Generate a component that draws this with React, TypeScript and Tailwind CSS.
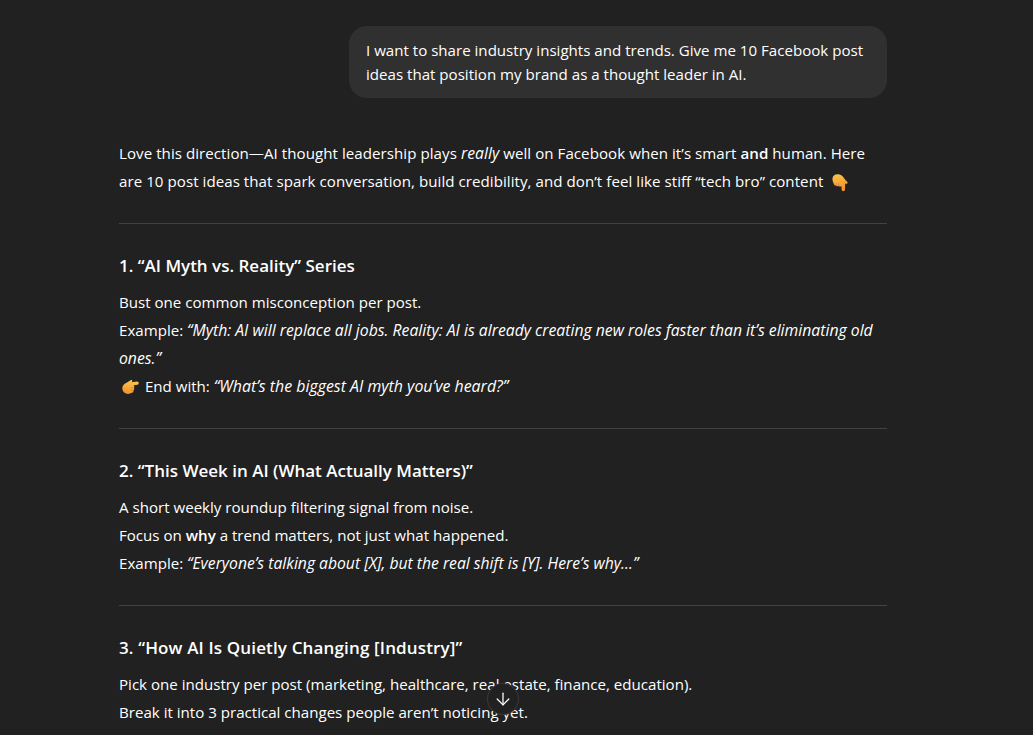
import { ArrowDown } from "lucide-react";

function PointDown() {
  return (
    <svg viewBox="0 0 16 18" className="inline-block ml-[5px] w-4 h-[18px] align-[-5px]">
      <defs>
        <linearGradient id="hand-down" x1="0" y1="0" x2="0.3" y2="1">
          <stop offset="0" stopColor="#fbc84a" />
          <stop offset="1" stopColor="#f2902e" />
        </linearGradient>
      </defs>
      <path d="M0.6 3.6 C1.2 1.4 3.4 0.2 6 0.3 C8.6 0.4 10.4 1.6 11.6 3.6 L13.6 6.2 C15 7.2 15.8 8 15.6 9 C15.2 10 14 10 13.2 9.5 L13 15.6 C12.9 17.8 9.7 17.8 9.6 15.6 L9.4 12 C8.6 12.8 7.4 12.7 6.8 12 C6 12.6 4.8 12.4 4.2 11.5 C3.2 11.8 2.2 11.2 2 10.2 C0.8 8.4 0.2 5.8 0.6 3.6 Z" fill="url(#hand-down)" />
      <path d="M6.8 12 L6.6 9.4 M4.2 11.5 L4.2 9.4" stroke="#d97a2b" strokeWidth="0.8" fill="none" />
    </svg>
  );
}

function PointRight() {
  return (
    <svg viewBox="0 0 17 18" className="inline-block ml-[3px] mr-[2px] w-[17px] h-[18px] align-[-4px]">
      <defs>
        <linearGradient id="hand-right" x1="0.6" y1="0" x2="0.3" y2="1">
          <stop offset="0" stopColor="#fbc84a" />
          <stop offset="1" stopColor="#f2902e" />
        </linearGradient>
      </defs>
      <path d="M0.3 10 C0.4 7.6 2 6 4.2 5 L8.6 2.3 C9.8 1.6 11 2.8 10 3.8 L9.6 4.2 L15 3.6 C17.2 3.6 17.3 6.6 15.2 6.8 L11.6 7.2 C12.5 8 12.6 9.2 11.9 9.9 C12.5 10.7 12.3 11.9 11.4 12.5 C11.7 13.5 11.1 14.6 10 14.8 C8.2 15.8 6 16.2 4 15.6 C1.6 14.8 0.2 12.6 0.3 10 Z" fill="url(#hand-right)" />
      <path d="M11.6 9.9 L8.8 9.7 M11.2 12.5 L8.8 12.2" stroke="#d97a2b" strokeWidth="0.8" fill="none" />
    </svg>
  );
}

export default function App() {
  return (
    <div className="relative h-[735px] overflow-hidden bg-[#212121] text-white text-[15.1px] font-['Open_Sans','Noto_Sans',sans-serif]">
      <div className="w-[768px] ml-[119px] pt-[26px]">
        <div className="flex justify-end">
          <div className="w-[538px] rounded-[18px] bg-[#303030] px-[17px] py-[12px] leading-[24px]">
            I want to share industry insights and trends. Give me 10 Facebook post ideas that position my brand as a thought leader in AI.
          </div>
        </div>

        <p className="mt-[41px] leading-[28px] tracking-[0.05px]">
          Love this direction—AI thought leadership plays <em className="text-[15.7px]">really</em> well on Facebook when it’s smart <strong className="font-semibold">and</strong> human. Here
          <br />
          are 10 post ideas that spark conversation, build credibility, and don’t feel like stiff “tech bro” content <PointDown />
        </p>
        <hr className="mt-[28px] border-white/15" />

        <h3 className="mt-[27px] text-[17px] leading-[30px] font-semibold">1. “AI Myth vs. Reality” Series</h3>
        <p className="mt-[7px] leading-[28px]">
          Bust one common misconception per post.
          <br />
          Example: <em className="text-[15.75px]">“Myth: AI will replace all jobs. Reality: AI is already creating new roles faster than it’s eliminating old ones.”</em>
          <br />
          <PointRight /> End with: <em className="text-[15.9px]">“What’s the biggest AI myth you’ve heard?”</em>
        </p>
        <hr className="mt-[28px] border-white/15" />

        <h3 className="mt-[27px] text-[17px] leading-[30px] font-semibold">2. “This Week in AI (What Actually Matters)”</h3>
        <p className="mt-[7px] leading-[28px]">
          A short weekly roundup filtering signal from noise.
          <br />
          Focus on <strong className="font-semibold">why</strong> a trend matters, not just what happened.
          <br />
          Example: <em className="text-[15.7px]">“Everyone’s talking about [X], but the real shift is [Y]. Here’s why…”</em>
        </p>
        <hr className="mt-[28px] border-white/15" />

        <h3 className="mt-[27px] text-[17px] tracking-[0.15px] leading-[30px] font-semibold">3. “How AI Is Quietly Changing [Industry]”</h3>
        <p className="mt-[7px] leading-[28px]">
          Pick one industry per post (marketing, healthcare, real estate, finance, education).
          <br />
          Break it into 3 practical changes people aren’t noticing yet.
        </p>
      </div>

      <button className="absolute left-[487px] top-[683px] w-8 h-8 rounded-full bg-[#212121] border border-white/10 flex items-center justify-center text-white">
        <ArrowDown size={20} strokeWidth={1.5} />
      </button>
    </div>
  );
}
